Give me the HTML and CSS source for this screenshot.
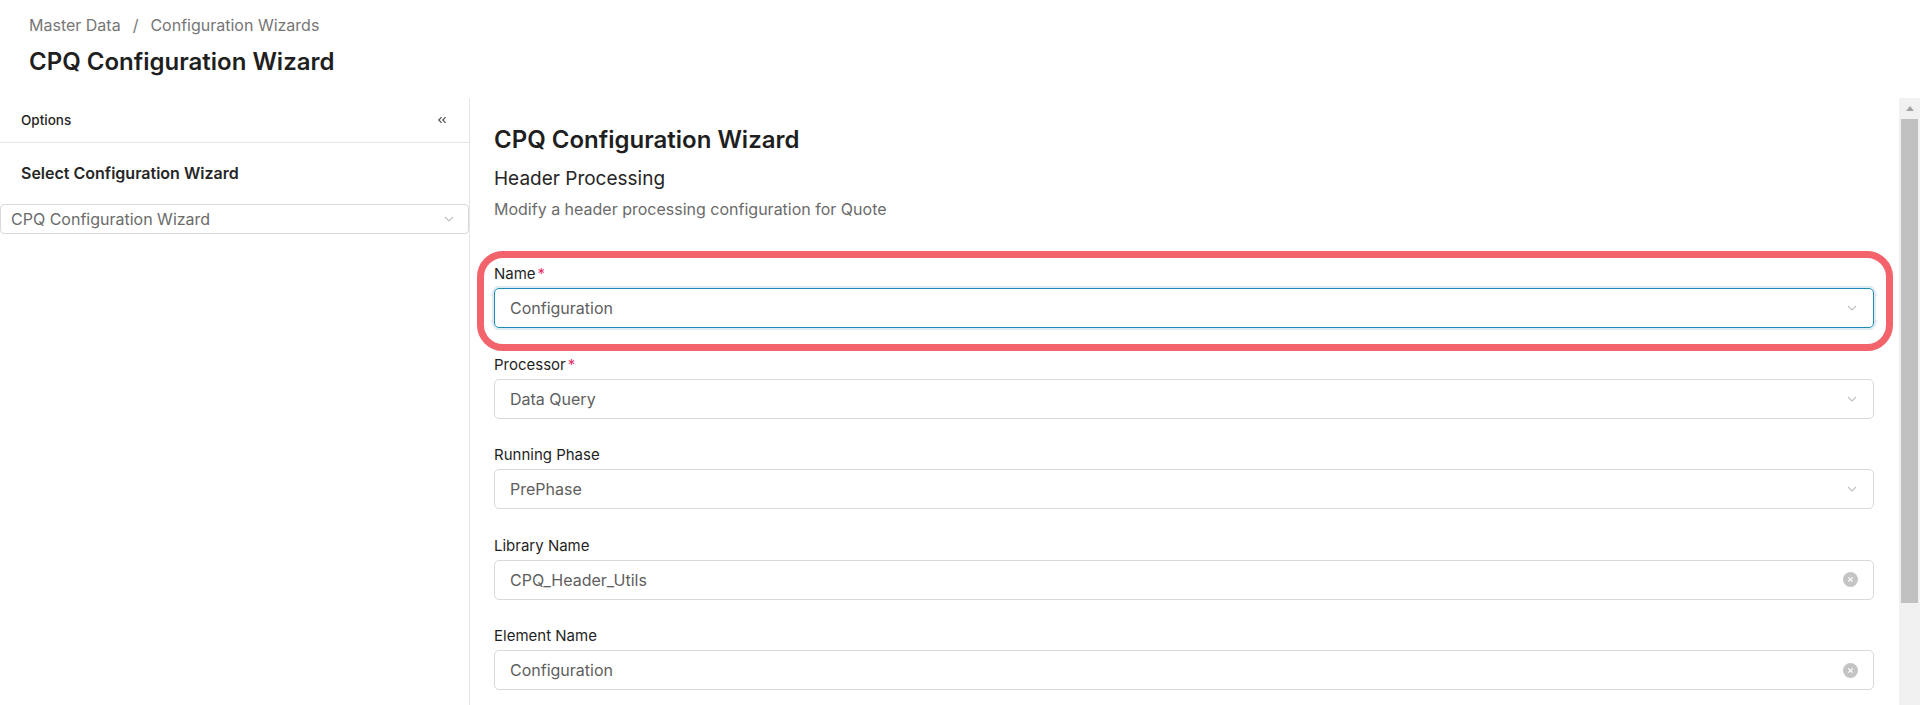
FILE: index.html
```html
<!DOCTYPE html>
<html lang="en">
<head>
<meta charset="utf-8">
<title>CPQ Configuration Wizard</title>
<link rel="stylesheet" href="styles.css">
</head>
<body>
<header class="page-header">
  <nav class="breadcrumb"><span>Master Data</span><span class="sep">/</span><span>Configuration Wizards</span></nav>
  <h1 class="page-title">CPQ Configuration Wizard</h1>
</header>
<div class="workspace">
  <aside class="sidebar">
    <div class="sidebar-head">
      <span class="sidebar-label">Options</span>
      <span class="collapse">
        <svg width="10" height="10" viewBox="0 0 10 10"><path d="M4.6 2.2 L1.8 5 L4.6 7.8 M8.6 2.2 L5.8 5 L8.6 7.8" fill="none" stroke="#555" stroke-width="1.2"/></svg>
      </span>
    </div>
    <div class="sidebar-title">Select Configuration Wizard</div>
    <div class="select select-sm">
      <span>CPQ Configuration Wizard</span>
      <svg class="chev" width="12" height="8" viewBox="0 0 12 8"><path d="M2 2 L6 6 L10 2" fill="none" stroke="#c2c2c2" stroke-width="1.2"/></svg>
    </div>
  </aside>
  <main class="panel">
    <h2 class="panel-title">CPQ Configuration Wizard</h2>
    <h3 class="section-title">Header Processing</h3>
    <p class="section-desc">Modify a header processing configuration for Quote</p>
    <div class="form">
      <div class="field highlight">
        <label>Name<span class="req">*</span></label>
        <div class="input focused">
          <span>Configuration</span>
          <svg class="chev" width="12" height="8" viewBox="0 0 12 8"><path d="M2 2 L6 6 L10 2" fill="none" stroke="#c2c2c2" stroke-width="1.2"/></svg>
        </div>
      </div>
      <div class="field">
        <label>Processor<span class="req">*</span></label>
        <div class="input">
          <span>Data Query</span>
          <svg class="chev" width="12" height="8" viewBox="0 0 12 8"><path d="M2 2 L6 6 L10 2" fill="none" stroke="#c2c2c2" stroke-width="1.2"/></svg>
        </div>
      </div>
      <div class="field">
        <label>Running Phase</label>
        <div class="input">
          <span>PrePhase</span>
          <svg class="chev" width="12" height="8" viewBox="0 0 12 8"><path d="M2 2 L6 6 L10 2" fill="none" stroke="#c2c2c2" stroke-width="1.2"/></svg>
        </div>
      </div>
      <div class="field">
        <label>Library Name</label>
        <div class="input">
          <span>CPQ_Header_Utils</span>
          <svg class="clear" width="15" height="15" viewBox="0 0 15 15"><circle cx="7.5" cy="7.5" r="7.5" fill="#c4c4c4"/><path d="M5.3 5.3 L9.7 9.7 M9.7 5.3 L5.3 9.7" stroke="#fff" stroke-width="1.2"/></svg>
        </div>
      </div>
      <div class="field">
        <label>Element Name</label>
        <div class="input">
          <span>Configuration</span>
          <svg class="clear" width="15" height="15" viewBox="0 0 15 15"><circle cx="7.5" cy="7.5" r="7.5" fill="#c4c4c4"/><path d="M5.3 5.3 L9.7 9.7 M9.7 5.3 L5.3 9.7" stroke="#fff" stroke-width="1.2"/></svg>
        </div>
      </div>
    </div>
  </main>
  <div class="scrollbar" aria-hidden="true">
    <div class="scroll-up"><span class="arrow-up"></span></div>
    <div class="scroll-thumb"></div>
  </div>
</div>
</body>
</html>
```
FILE: styles.css
```css
html, body {
  margin: 0;
  height: 100%;
}
body {
  font-family: Inter, "Noto Sans", sans-serif;
  color: #262626;
  background: #fff;
  overflow: hidden;
  display: flex;
  flex-direction: column;
}
.page-header {
  height: 98px;
  box-sizing: border-box;
  padding: 13px 29px 0;
  flex-shrink: 0;
}
.breadcrumb {
  font-size: 16px;
  line-height: 24px;
  color: #767676;
}
.sep {
  margin: 0 12px;
}
.page-title {
  margin: 9px 0 0;
  font-size: 24px;
  line-height: 32px;
  font-weight: 600;
  color: #1f1f1f;
}
.workspace {
  flex: 1;
  min-height: 0;
  display: flex;
}
.sidebar {
  width: 469px;
  flex-shrink: 0;
  border-right: 1px solid #e6e6e6;
}
.sidebar-head {
  height: 45px;
  box-sizing: border-box;
  border-bottom: 1px solid #e6e6e6;
  padding: 0 22px 0 21px;
  display: flex;
  align-items: center;
  justify-content: space-between;
}
.sidebar-label {
  font-size: 13.5px;
  font-weight: 500;
  color: #262626;
}
.collapse {
  display: flex;
}
.sidebar-title {
  padding: 18px 21px 19px;
  font-size: 16px;
  line-height: 24px;
  font-weight: 600;
  color: #262626;
}
.select-sm {
  height: 30px;
  box-sizing: border-box;
  border: 1px solid #d9d9d9;
  border-radius: 4px;
  padding: 0 13px 0 10px;
  display: flex;
  align-items: center;
  justify-content: space-between;
  font-size: 16px;
  color: #6b6b6b;
}
.panel {
  flex: 1;
  min-width: 0;
  overflow: hidden;
  padding: 26px 25px 0 24px;
}
.scrollbar {
  width: 21px;
  flex-shrink: 0;
  background: #f1f1f1;
  display: flex;
  flex-direction: column;
}
.scroll-up {
  height: 21px;
  display: flex;
  align-items: center;
  justify-content: center;
}
.arrow-up {
  width: 0;
  height: 0;
  border-left: 4.5px solid transparent;
  border-right: 4.5px solid transparent;
  border-bottom: 5px solid #a3a3a3;
}
.scroll-thumb {
  height: 484px;
  margin: 0 2px;
  background: #c1c1c1;
}
.panel-title {
  margin: 0;
  font-size: 24px;
  line-height: 32px;
  font-weight: 600;
  color: #1f1f1f;
}
.section-title {
  margin: 10px 0 0;
  font-size: 19px;
  line-height: 26px;
  font-weight: 400;
  color: #262626;
}
.section-desc {
  margin: 6px 0 0;
  font-size: 16px;
  line-height: 22px;
  color: #6b6b6b;
}
.form {
  margin-top: 44px;
  display: flex;
  flex-direction: column;
  gap: 26.5px;
}
.field {
  display: flex;
  flex-direction: column;
}
.field label {
  font-size: 15px;
  line-height: 20px;
  margin-bottom: 4px;
  font-weight: 400;
  color: #1f1f1f;
}
.req {
  color: #e8306b;
  margin-left: 2px;
}
.input {
  height: 40px;
  box-sizing: border-box;
  border: 1px solid #d9d9d9;
  border-radius: 5px;
  padding: 0 15px;
  display: flex;
  align-items: center;
  justify-content: space-between;
  font-size: 16px;
  color: #5e5e5e;
}
.input.focused {
  border-color: #1f8ab6;
  box-shadow: 0 0 0 2px #dcecf2;
}
.highlight {
  position: relative;
}
.highlight::after {
  content: "";
  position: absolute;
  top: -13px;
  left: -17px;
  right: -19px;
  bottom: -23px;
  border: 7px solid #f2636b;
  border-radius: 26px;
  pointer-events: none;
}
.chev, .clear {
  flex-shrink: 0;
}
```
